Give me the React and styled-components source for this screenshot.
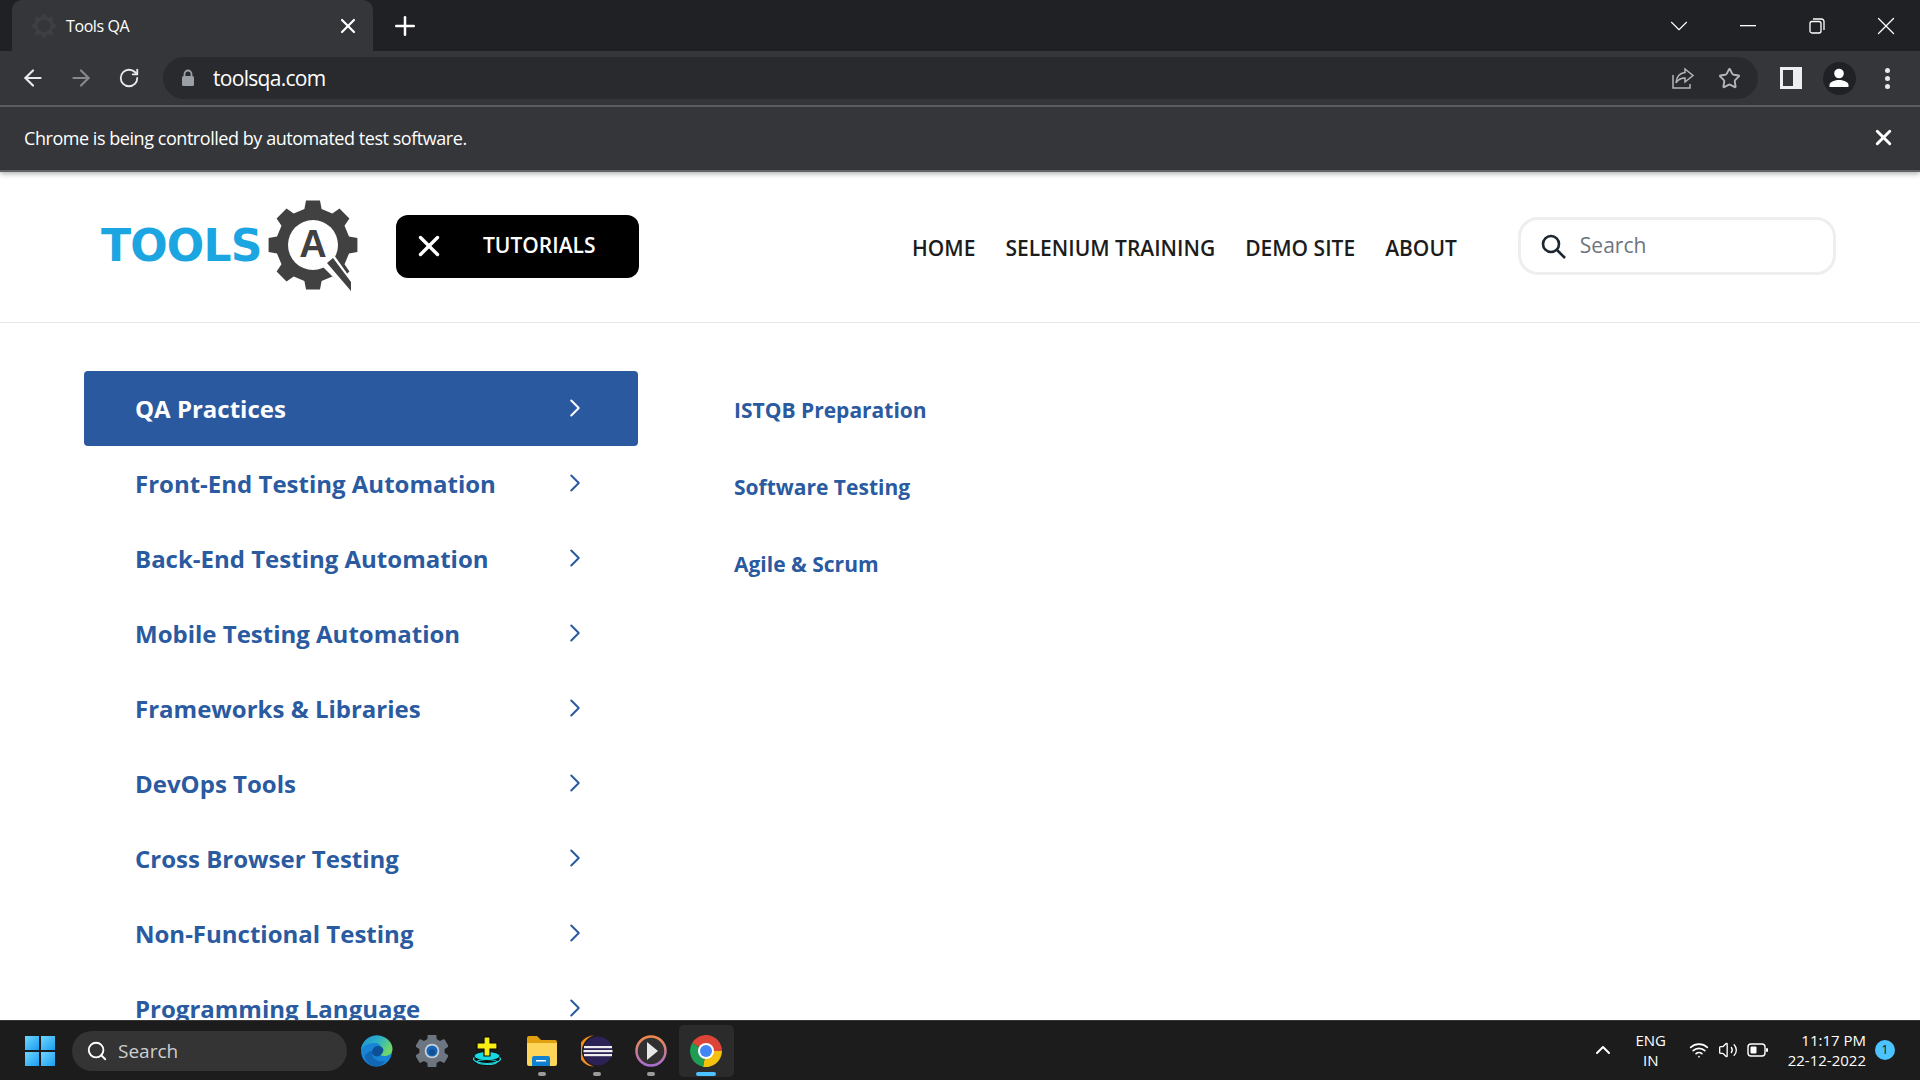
import React from 'react';
import styled, { createGlobalStyle } from 'styled-components';
import {
  ArrowLeft,
  ArrowRight,
  RotateCw,
  Star,
  X,
  Plus,
  ChevronDown,
  ChevronRight,
  ChevronUp,
  Search,
  Wifi,
  Volume2,
} from 'lucide-react';

const GlobalStyle = createGlobalStyle`
  html, body {
    margin: 0;
    padding: 0;
    background: #fff;
  }
  * { box-sizing: border-box; }
`;

const Screen = styled.div`
  width: 1920px;
  height: 1080px;
  display: flex;
  flex-direction: column;
  overflow: hidden;
  font-family: 'Open Sans', sans-serif;
`;

/* browser chrome */
const TabStrip = styled.div`
  height: 51px;
  flex: none;
  background: #202124;
  display: flex;
  align-items: stretch;
  padding-left: 12px;
  color: #fff;
`;

const Tab = styled.div`
  width: 361px;
  background: #35363a;
  border-radius: 10px 10px 0 0;
  display: flex;
  align-items: center;
  padding: 0 13px 0 20px;
  font-size: 16px;
  letter-spacing: -0.4px;
`;

const TabTitle = styled.span`
  flex: 1;
  margin-left: 10px;
`;

const NewTab = styled.div`
  width: 64px;
  display: flex;
  align-items: center;
  justify-content: center;
`;

const WindowControls = styled.div`
  margin-left: auto;
  display: flex;
`;

const WindowButton = styled.div`
  width: 69px;
  display: flex;
  align-items: center;
  justify-content: center;
`;

const Toolbar = styled.div`
  height: 56px;
  flex: none;
  background: #35363a;
  border-bottom: 2px solid #5f6063;
  display: flex;
  align-items: center;
  padding: 0 9px;
`;

const ToolButton = styled.div`
  width: ${(props) => props.$width || 48}px;
  height: 42px;
  flex: none;
  display: flex;
  align-items: center;
  justify-content: center;
  color: ${(props) => props.$color || '#e8eaed'};
`;

const Omnibox = styled.div`
  flex: 1;
  height: 42px;
  margin: 0 9px 0 10px;
  padding: 0 7px 0 18px;
  border-radius: 21px;
  background: #292a2d;
  display: flex;
  align-items: center;
  color: #fff;
`;

const Url = styled.span`
  flex: 1;
  margin-left: 18px;
  font-size: 21px;
  letter-spacing: -0.7px;
`;

const Avatar = styled.div`
  width: 33px;
  height: 33px;
  border-radius: 50%;
  background: #202124;
  display: flex;
  align-items: center;
  justify-content: center;
`;

const Dots = styled.div`
  display: flex;
  flex-direction: column;
  gap: 3px;
`;

const Dot = styled.span`
  width: 5px;
  height: 5px;
  border-radius: 50%;
  background: #e8eaed;
`;

const InfoBar = styled.div`
  height: 65px;
  flex: none;
  background: #35363a;
  border-bottom: 2px solid #606164;
  box-shadow: 0 2px 5px rgba(0, 0, 0, 0.3);
  position: relative;
  display: flex;
  align-items: center;
  justify-content: space-between;
  padding: 0 24px 2px;
  color: #fff;
  font-size: 18px;
  letter-spacing: -0.45px;
`;

/* site header */
const SiteHeader = styled.header`
  height: 151px;
  flex: none;
  border-bottom: 1px solid #e7e7e7;
  display: flex;
  align-items: center;
  padding: 0 0 2px 100px;
`;

const Logo = styled.div`
  width: 260px;
  display: flex;
  align-items: center;
  margin-right: 36px;
`;

const LogoWord = styled.span`
  width: 167px;
  margin-left: 1px;
  font-family: 'DejaVu Sans', sans-serif;
  font-weight: 700;
  font-size: 44px;
  line-height: 1;
  letter-spacing: -0.8px;
  color: #1ba5e1;
`;

const TutorialsButton = styled.div`
  width: 243px;
  height: 63px;
  background: #000;
  border-radius: 12px;
  color: #fff;
  display: flex;
  align-items: center;
  padding-left: 16px;
  font-size: 21px;
  font-weight: 600;
`;

const TutorialsLabel = styled.span`
  margin-left: 37px;
  margin-bottom: 2px;
`;

const Nav = styled.nav`
  display: flex;
  gap: 30px;
  margin-left: 273px;
  margin-top: 4px;
  font-size: 21px;
  font-weight: 600;
  color: #1c1c1c;
`;

const SearchBox = styled.div`
  width: 318px;
  height: 58px;
  margin-left: 61px;
  border: 3px solid #eeeeee;
  border-radius: 20px;
  display: flex;
  align-items: center;
  padding-left: 20px;
  color: #1c2530;
`;

const SearchHint = styled.span`
  margin-left: 14px;
  margin-bottom: 2px;
  font-size: 21px;
  color: #6c757d;
`;

/* tutorials menu */
const Main = styled.main`
  flex: 1;
  min-height: 0;
  overflow: hidden;
  display: flex;
  padding: 48px 0 0 84px;
  background: #fff;
`;

const SideMenu = styled.div`
  width: 554px;
  flex: none;
`;

const MenuRow = styled.div`
  height: 75px;
  display: flex;
  align-items: center;
  justify-content: space-between;
  padding: 0 48px 0 51px;
  border-radius: 4px;
  font-size: 24px;
  font-weight: 700;
  color: ${(props) => (props.$active ? '#fff' : '#2a5aa0')};
  background: ${(props) => (props.$active ? '#2a59a0' : 'transparent')};
`;

const RowChevron = styled(ChevronRight)`
  margin-bottom: 2px;
`;

const SubMenu = styled.div`
  margin-left: 96px;
`;

const SubItem = styled.div`
  height: 77px;
  display: flex;
  align-items: center;
  font-size: 21px;
  font-weight: 700;
  color: #2a5aa0;
`;

/* windows taskbar */
const Taskbar = styled.div`
  height: 60px;
  flex: none;
  background: #1c1c1c;
  border-top: 1px solid #383838;
  display: flex;
  align-items: center;
  padding-left: 25px;
  color: #fff;
  position: relative;
`;

const StartIcon = styled.div`
  width: 30px;
  height: 30px;
  display: grid;
  grid-template-columns: 1fr 1fr;
  gap: 2px;
  margin-right: 17px;
`;

const StartPane = styled.span`
  background: linear-gradient(135deg, #6fd6ff, #1a9df0);
`;

const TaskSearch = styled.div`
  width: 275px;
  height: 40px;
  border-radius: 20px;
  background: #343434;
  display: flex;
  align-items: center;
  padding-left: 14px;
  gap: 10px;
  font-size: 19px;
  color: #cfcfcf;
  margin-right: 3px;
`;

const AppSlot = styled.div`
  width: 54.8px;
  height: 52px;
  flex: none;
  position: relative;
  display: flex;
  align-items: center;
  justify-content: center;
  border-radius: 5px;
  background: ${(props) => (props.$focused ? '#2b2b2b' : 'transparent')};
`;

const RunningMark = styled.span`
  position: absolute;
  bottom: 1px;
  left: 50%;
  transform: translateX(-50%);
  height: 4px;
  border-radius: 2px;
  width: ${(props) => (props.$focused ? '20px' : '8px')};
  background: ${(props) => (props.$focused ? '#4cc2ff' : '#9a9a9a')};
`;

const Tray = styled.div`
  margin-left: auto;
  display: flex;
  align-items: center;
  padding: 0 25px 2px 0;
`;

const Lang = styled.div`
  width: 50px;
  margin-left: 11px;
  text-align: center;
  font-size: 15px;
  line-height: 20px;
`;

const TrayIcons = styled.div`
  display: flex;
  align-items: center;
  gap: 9px;
  margin-left: 13px;
`;

const Clock = styled.div`
  margin-left: 20px;
  text-align: right;
  font-size: 15px;
  line-height: 20px;
`;

const Badge = styled.div`
  width: 20px;
  height: 20px;
  margin-left: 9px;
  border-radius: 50%;
  background: #4cc2ff;
  color: #111;
  font-size: 12px;
  display: flex;
  align-items: center;
  justify-content: center;
`;

const gearPath = (cx, cy, inner, outer, teeth) => {
  const step = (Math.PI * 2) / teeth;
  const pts = [];
  for (let i = 0; i < teeth; i += 1) {
    const a = i * step - Math.PI / 2;
    const spread = step * 0.2;
    const base = step * 0.3;
    [
      [a - base, inner],
      [a - spread, outer],
      [a + spread, outer],
      [a + base, inner],
    ].forEach(([t, r]) => {
      pts.push(`${(cx + r * Math.cos(t)).toFixed(1)} ${(cy + r * Math.sin(t)).toFixed(1)}`);
    });
  }
  return `M${pts.join('L')}Z`;
};

const GearLogo = () => (
  <svg width="92" height="92" viewBox="0 0 92 92">
    <path d={gearPath(45, 45, 37, 45, 8)} fill="#414141" />
    <circle cx="45" cy="45" r="25" fill="#fff" />
    <path d="M54 66l12-11 22 31v6h-8z" fill="#fff" />
    <path d="M59 63l6-5 18 24v9z" fill="#414141" />
    <text x="45" y="57" textAnchor="middle" fontFamily="Liberation Sans, sans-serif" fontWeight="700" fontSize="38" fill="#414141">A</text>
  </svg>
);

const Favicon = () => (
  <svg width="24" height="24" viewBox="0 0 92 92">
    <path d={gearPath(46, 46, 36, 46, 8)} fill="#3e3f41" />
    <circle cx="46" cy="46" r="24" fill="#35363a" />
  </svg>
);

const LockIcon = () => (
  <svg width="14" height="18" viewBox="0 0 14 18">
    <path d="M3.500 7V5a3.500 3.500 0 0 1 7 0v2" fill="none" stroke="#9aa0a6" strokeWidth="1.800" />
    <rect x="1" y="7" width="12" height="10" rx="1.500" fill="#9aa0a6" />
  </svg>
);

const ShareIcon = () => (
  <svg width="24" height="24" viewBox="0 0 24 24" fill="none" stroke="#b5b6b8" strokeWidth="1.500">
    <path d="M2 9v13h17v-4" />
    <path d="M14 3l8 6.500-8 6.500v-4c-4 0-7 1.500-9 5 .5-6 4-10 9-10.500z" />
  </svg>
);

const RestoreIcon = () => (
  <svg width="16" height="16" viewBox="0 0 16 16" fill="none" stroke="#fff" strokeWidth="1.300">
    <rect x="1" y="3.500" width="11" height="11.500" rx="2" />
    <path d="M4 1h8.500a2.500 2.500 0 0 1 2.500 2.500V12" />
  </svg>
);

const SidePanelIcon = () => (
  <svg width="22" height="22" viewBox="0 0 22 22">
    <path d="M0 0h22v22H0zM3 3v16h10V3z" fill="#eceef0" fillRule="evenodd" />
  </svg>
);

const UserIcon = () => (
  <svg width="22" height="22" viewBox="0 0 22 22" fill="#fff">
    <circle cx="11" cy="6.500" r="4.800" />
    <path d="M1.500 20v-2c0-3.500 6-5 9.500-5s9.500 1.500 9.500 5v2z" />
  </svg>
);

const LensIcon = () => (
  <svg width="25" height="25" viewBox="0 0 25 25" fill="none" stroke="currentColor" strokeWidth="2.600">
    <circle cx="10" cy="10" r="8" />
    <path d="M15.500 15.500L24 24" />
  </svg>
);

const BatteryIcon = () => (
  <svg width="21" height="14" viewBox="0 0 21 14">
    <rect x="1" y="1" width="17" height="12" rx="3" fill="none" stroke="#fff" strokeWidth="1.400" />
    <rect x="3.500" y="3.500" width="6" height="7" rx="1" fill="#fff" />
    <rect x="19" y="5" width="2" height="4" rx="1" fill="#fff" />
  </svg>
);

const EdgeIcon = () => (
  <svg width="32" height="32" viewBox="0 0 32 32">
    <defs>
      <linearGradient id="edgeTop" x1="0" y1="0" x2="1" y2="0.500">
        <stop offset="0" stopColor="#1a8fd6" />
        <stop offset="0.550" stopColor="#2fb3c4" />
        <stop offset="1" stopColor="#6fd66a" />
      </linearGradient>
    </defs>
    <circle cx="15.500" cy="16" r="15.500" fill="#1784d6" />
    <path d="M0 15C1 6 8 .5 16 .5 25 .5 31.500 7 31.500 14c0 5-4 7-8 7-3 0-5-1-4.500-2.500 1-1 2-2 2-4 0-4-3.500-6.500-7-6.500C8 8 2.500 10.500 0 15z" fill="url(#edgeTop)" />
    <path d="M22 13.500c1 2-.5 5-1.500 5.500-2 3-7 3.500-9 0-1.500-3 1-7.500 5-8 2.500-.2 4.500 1 5.500 2.500z" fill="#0d4f94" />
    <path d="M11 16c-1 7 6 12 13 10-2 3-5 5.500-8.500 5.500-6 0-11-5-12-10.500 2-3 5-5 7.500-5z" fill="#1268b4" />
    <path d="M32 19c-1 5-4 9-8 11.500-2 .5-4 .5-4 0 6 0 9-4 12-11.500z" fill="#1c1c1c" />
  </svg>
);

const SettingsIcon = () => (
  <svg width="32" height="32" viewBox="0 0 92 92">
    <path d={gearPath(46, 46, 34, 46, 6)} fill="#6d7680" stroke="#6d7680" strokeWidth="6" strokeLinejoin="round" />
    <circle cx="46" cy="46" r="21" fill="#c9d2da" />
    <circle cx="46" cy="46" r="16" fill="#1667b7" />
    <circle cx="46" cy="49" r="9" fill="#134f92" />
  </svg>
);

const CrossAppIcon = () => (
  <svg width="30" height="30" viewBox="0 0 30 30">
    <ellipse cx="15" cy="24" rx="14" ry="5.500" fill="#0b0b0b" />
    <ellipse cx="15" cy="23" rx="13.500" ry="4.500" fill="none" stroke="#21d3dc" strokeWidth="1.200" />
    <ellipse cx="15" cy="20" rx="13" ry="4.500" fill="#18d8e2" stroke="#0b0b0b" strokeWidth="1" />
    <ellipse cx="15" cy="26" rx="10" ry="2.500" fill="none" stroke="#21d3dc" strokeWidth="1.200" />
    <path d="M12 1h6v6h7v6h-7v7h-6v-7H5V7h7z" fill="#f7ee14" stroke="#0b0b0b" strokeWidth="1.200" />
  </svg>
);

const FolderIcon = () => (
  <svg width="30" height="30" viewBox="0 0 30 30">
    <path d="M0 2a2 2 0 0 1 2-2h8l4 4h14a2 2 0 0 1 2 2v4H0z" fill="#e0a010" />
    <path d="M0 7h30v21a2 2 0 0 1-2 2H2a2 2 0 0 1-2-2z" fill="#fdd55b" />
    <path d="M5 22a2 2 0 0 1 2-2h14a2 2 0 0 1 2 2v8H5z" fill="#1081d0" />
    <rect x="9" y="24" width="10" height="1.500" fill="#fff" />
  </svg>
);

const EclipseIcon = () => (
  <svg width="32" height="32" viewBox="0 0 32 32">
    <path d="M13 0.500A15.500 15.500 0 0 0 13 31.500A16 16 0 0 1 13 .5z" fill="#f28c1e" />
    <circle cx="17" cy="16" r="14.500" fill="#2c2255" />
    <rect x="3" y="11" width="28" height="2.200" fill="#eee" />
    <rect x="2.500" y="15" width="29" height="2.200" fill="#eee" />
    <rect x="3" y="19" width="28" height="2.200" fill="#eee" />
  </svg>
);

const PlayerIcon = () => (
  <svg width="32" height="32" viewBox="0 0 32 32">
    <defs>
      <linearGradient id="playerRing" x1="0" y1="0" x2="0" y2="1">
        <stop offset="0" stopColor="#f08a4b" />
        <stop offset="1" stopColor="#a86fd0" />
      </linearGradient>
    </defs>
    <circle cx="16" cy="16" r="14.500" fill="#303030" stroke="url(#playerRing)" strokeWidth="2.500" />
    <path d="M12 7l11 9-11 9z" fill="#e8e8e8" />
  </svg>
);

const ChromeIcon = () => (
  <svg width="32" height="32" viewBox="0 0 32 32">
    <path d="M16 16L2.140 8A16 16 0 0 1 32 16Z" fill="#db4437" />
    <path d="M16 16L32 16A16 16 0 0 1 13 31.700Z" fill="#f4c20d" />
    <path d="M16 16L13 31.700A16 16 0 0 1 2.140 8Z" fill="#1f9d55" />
    <circle cx="16" cy="16" r="8" fill="#fff" />
    <circle cx="16" cy="16" r="6" fill="#4285f4" />
  </svg>
);

const menuItems = [
  'QA Practices',
  'Front-End Testing Automation',
  'Back-End Testing Automation',
  'Mobile Testing Automation',
  'Frameworks & Libraries',
  'DevOps Tools',
  'Cross Browser Testing',
  'Non-Functional Testing',
  'Programming Language',
];

const subItems = ['ISTQB Preparation', 'Software Testing', 'Agile & Scrum'];

const navLinks = ['HOME', 'SELENIUM TRAINING', 'DEMO SITE', 'ABOUT'];

const apps = [
  { id: 'edge', icon: <EdgeIcon /> },
  { id: 'settings', icon: <SettingsIcon /> },
  { id: 'cross', icon: <CrossAppIcon /> },
  { id: 'folder', icon: <FolderIcon />, running: true },
  { id: 'eclipse', icon: <EclipseIcon />, running: true },
  { id: 'player', icon: <PlayerIcon />, running: true },
  { id: 'chrome', icon: <ChromeIcon />, running: true, focused: true },
];

const App = () => (
  <Screen>
    <GlobalStyle />
    <TabStrip>
      <Tab>
        <Favicon />
        <TabTitle>Tools QA</TabTitle>
        <X size={24} strokeWidth={2.2} />
      </Tab>
      <NewTab>
        <Plus size={30} strokeWidth={2} />
      </NewTab>
      <WindowControls>
        <WindowButton>
          <ChevronDown size={30} strokeWidth={0.9} />
        </WindowButton>
        <WindowButton>
          <svg width="16" height="2" viewBox="0 0 16 2">
            <rect width="16" height="1.300" fill="#fff" />
          </svg>
        </WindowButton>
        <WindowButton>
          <RestoreIcon />
        </WindowButton>
        <WindowButton>
          <X size={30} strokeWidth={1} />
        </WindowButton>
      </WindowControls>
    </TabStrip>

    <Toolbar>
      <ToolButton>
        <ArrowLeft size={26} strokeWidth={2} />
      </ToolButton>
      <ToolButton $color="#87888b">
        <ArrowRight size={26} strokeWidth={2} />
      </ToolButton>
      <ToolButton>
        <RotateCw size={22} strokeWidth={2} />
      </ToolButton>
      <Omnibox>
        <LockIcon />
        <Url>toolsqa.com</Url>
        <ToolButton>
          <ShareIcon />
        </ToolButton>
        <ToolButton $width={44} $color="#b5b6b8">
          <Star size={23} strokeWidth={2} />
        </ToolButton>
      </Omnibox>
      <ToolButton>
        <SidePanelIcon />
      </ToolButton>
      <ToolButton>
        <Avatar>
          <UserIcon />
        </Avatar>
      </ToolButton>
      <ToolButton>
        <Dots>
          <Dot />
          <Dot />
          <Dot />
        </Dots>
      </ToolButton>
    </Toolbar>

    <InfoBar>
      <span>Chrome is being controlled by automated test software.</span>
      <X size={25} strokeWidth={2.8} />
    </InfoBar>

    <SiteHeader>
      <Logo>
        <LogoWord>TOOLS</LogoWord>
        <GearLogo />
      </Logo>
      <TutorialsButton>
        <X size={34} strokeWidth={2.4} />
        <TutorialsLabel>TUTORIALS</TutorialsLabel>
      </TutorialsButton>
      <Nav>
        {navLinks.map((link) => (
          <span key={link}>{link}</span>
        ))}
      </Nav>
      <SearchBox>
        <LensIcon />
        <SearchHint>Search</SearchHint>
      </SearchBox>
    </SiteHeader>

    <Main>
      <SideMenu>
        {menuItems.map((item, index) => (
          <MenuRow key={item} $active={index === 0}>
            <span>{item}</span>
            <RowChevron size={30} strokeWidth={1.6} />
          </MenuRow>
        ))}
      </SideMenu>
      <SubMenu>
        {subItems.map((item) => (
          <SubItem key={item}>{item}</SubItem>
        ))}
      </SubMenu>
    </Main>

    <Taskbar>
      <StartIcon>
        <StartPane />
        <StartPane />
        <StartPane />
        <StartPane />
      </StartIcon>
      <TaskSearch>
        <Search size={22} strokeWidth={2} color="#fff" />
        <span>Search</span>
      </TaskSearch>
      {apps.map((app) => (
        <AppSlot key={app.id} $focused={app.focused}>
          {app.icon}
          {app.running && <RunningMark $focused={app.focused} />}
        </AppSlot>
      ))}
      <Tray>
        <ChevronUp size={24} strokeWidth={2} />
        <Lang>
          ENG
          <br />
          IN
        </Lang>
        <TrayIcons>
          <Wifi size={20} strokeWidth={2} />
          <Volume2 size={20} strokeWidth={1.6} />
          <BatteryIcon />
        </TrayIcons>
        <Clock>
          11:17 PM
          <br />
          22-12-2022
        </Clock>
        <Badge>1</Badge>
      </Tray>
    </Taskbar>
  </Screen>
);

export default App;
